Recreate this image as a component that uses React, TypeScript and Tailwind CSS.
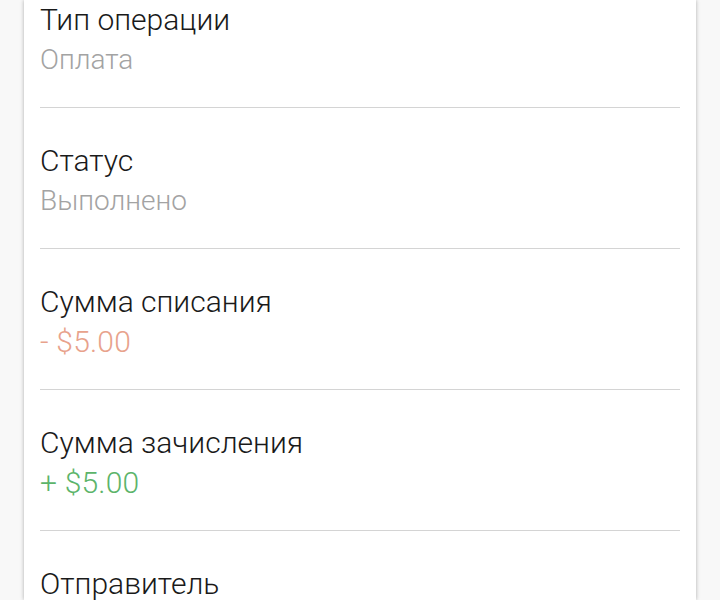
const rows = [
  { label: "Тип операции", value: "Оплата", color: "text-[28px] text-[#a3a3a3]" },
  { label: "Статус", value: "Выполнено", color: "text-[28px] text-[#a3a3a3]" },
  { label: "Сумма списания", value: "- $5.00", color: "text-[30px] tracking-[0.2px] text-[#e8a28c]" },
  { label: "Сумма зачисления", value: "+ $5.00", color: "text-[30px] tracking-[0.2px] text-[#5cb46a]" },
  { label: "Отправитель", value: "", color: "text-[28px] text-[#a3a3a3]" },
];

export default function App() {
  return (
    <div className="h-[600px] overflow-hidden bg-[#f8f8f8] font-['Roboto',sans-serif]">
      <div className="mx-[24px] flex h-full flex-col bg-white px-4 shadow-[0_0_4px_rgba(0,0,0,0.3)]">
        <div className="-mt-[33px]">
          {rows.map((r) => (
            <div key={r.label} className="border-b border-[#d4d4d4] pb-[27px] pt-[33px]">
              <div className="text-[30px] font-light leading-[40px] text-[#1a1a1a]">{r.label}</div>
              <div className={`font-light leading-[40px] ${r.color}`}>
                {r.value || "\u00a0"}
              </div>
            </div>
          ))}
        </div>
      </div>
    </div>
  );
}
